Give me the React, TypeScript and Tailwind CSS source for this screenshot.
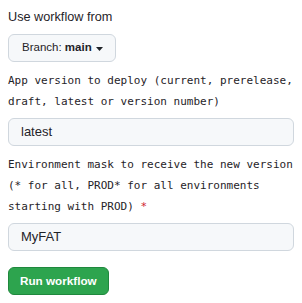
export default function App() {
  const sans = "font-['Segoe_UI','Liberation_Sans',Arial,sans-serif]"
  const mono = "font-['DejaVu_Sans_Mono','Liberation_Mono',monospace]"

  return (
    <div className={`w-[302px] h-[303px] bg-white px-2 pt-[7px] text-[#1f2328] ${sans}`}>
      <div className="text-[12.7px] leading-5">Use workflow from</div>

      <button
        type="button"
        className="mt-[7px] flex h-[28px] items-center gap-[4px] rounded-md border border-[#d0d7de] bg-[#f6f8fa] pl-[13px] pr-[12px] text-[11.5px]"
      >
        <span>
          Branch: <span className="font-semibold">main</span>
        </span>
        <svg width="7" height="4" viewBox="0 0 7 4" className="mt-[1px]">
          <path d="M0 0h7L3.5 4z" fill="#1f2328" />
        </svg>
      </button>

      <div className={`mt-[8px] text-[11px] leading-[21px] ${mono}`}>
        App version to deploy (current, prerelease, draft, latest or version number)
      </div>
      <div className="mt-[6px] flex h-[28px] items-center rounded-md border border-[#d0d7de] bg-[#f6f8fa] px-3 text-[13px]">
        latest
      </div>

      <div className={`mt-[8px] text-[11px] leading-[21px] ${mono}`}>
        Environment mask to receive the new version (* for all, PROD* for all environments starting with PROD)
        <span className="text-[#cf222e]"> *</span>
      </div>
      <div className="mt-[6px] flex h-[28px] items-center rounded-md border border-[#d0d7de] bg-[#f6f8fa] px-3 text-[13px]">
        MyFAT
      </div>

      <button
        type="button"
        className="mt-[16px] flex h-[28px] items-center rounded-md border border-[#1f883d] bg-[#2da44e] px-[11px] text-[11.7px] font-bold text-white"
      >
        Run workflow
      </button>
    </div>
  )
}
